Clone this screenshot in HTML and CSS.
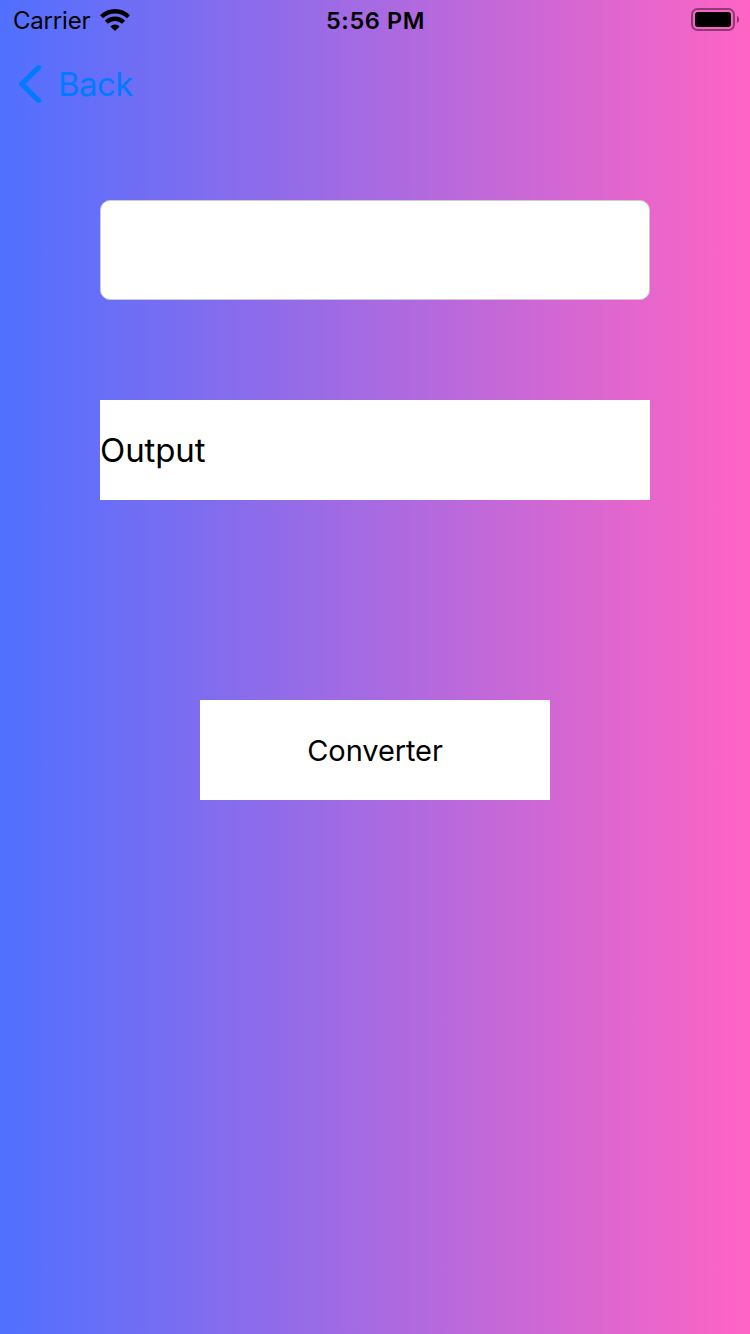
FILE: index.html
```html
<!DOCTYPE html>
<html lang="en">
<head>
<meta charset="utf-8">
<title>Converter</title>
<link rel="stylesheet" href="styles.css">
</head>
<body>
<div class="screen">
  <header class="status">
    <div class="status-left"><span class="carrier">Carrier</span>
      <svg class="wifi" width="30" height="22" viewBox="0 0 30 22"><g fill="none" stroke="#000" stroke-width="4.3"><path d="M1.500 7.700a19.500 19.500 0 0 1 27 0"/><path d="M6.400 13.200a12.400 12.400 0 0 1 17.200 0"/></g><path d="M15 22l-4.600-4.600a6.800 6.800 0 0 1 9.200 0z"/></svg>
    </div>
    <span class="time">5:56 PM</span>
    <div class="status-right"><svg class="battery" width="49" height="24" viewBox="0 0 49 24"><rect x="1" y="1" width="42" height="21" rx="5.5" fill="none" stroke="#000" stroke-opacity=".42" stroke-width="2"/><rect x="4" y="4" width="36" height="15" rx="3"/><path d="M46 8c2.700 1 2.700 6 0 7z" fill-opacity=".45"/></svg></div>
  </header>
  <nav class="nav"><svg class="chevron" width="24" height="40" viewBox="0 0 24 40"><path d="M20.500 3.500L3.800 20l16.700 16.500" fill="none" stroke="#007aff" stroke-width="5.200" stroke-linecap="round" stroke-linejoin="round"/></svg><span class="back">Back</span></nav>
  <main class="content">
    <input class="field" type="text" aria-label="Input">
    <div class="output"><span class="output-text">Output</span></div>
    <button class="convert"><span class="convert-text">Converter</span></button>
  </main>
</div>
</body>
</html>
```
FILE: styles.css
```css
* { box-sizing: border-box; }
body { margin: 0; font-family: Inter, "Liberation Sans", sans-serif; }
.screen { width: 750px; height: 1334px; background: linear-gradient(90deg, #5070ff, #ff64c4); overflow: hidden; }
.status { height: 40px; display: grid; grid-template-columns: 1fr auto 1fr; align-items: center; padding: 0 10px 0 13px; color: #000; }
.status-left { display: flex; align-items: center; gap: 9.5px; }
.status-right { display: flex; justify-content: flex-end; }
.carrier { font-size: 24px; line-height: 38px; padding-top: 2px; letter-spacing: -0.2px; }
.time { font-size: 23.5px; line-height: 38px; padding-top: 2px; font-weight: 570; letter-spacing: 0.6px; margin-left: -2px; }
.nav { height: 88px; display: flex; align-items: center; padding-left: 18px; gap: 16px; }
.back { font-size: 33px; line-height: 40px; color: #007aff; letter-spacing: -0.6px; }
.content { display: flex; flex-direction: column; align-items: center; padding-top: 72px; }
.field { width: 550px; height: 100px; border: 1px solid #ccc; border-radius: 10px; background: #fff; padding: 0 14px; font-size: 34px; outline: none; }
.output { width: 550px; height: 100px; margin-top: 100px; background: #fff; display: flex; align-items: center; font-size: 33px; letter-spacing: -0.1px; }
.convert { width: 350px; height: 100px; margin-top: 200px; background: #fff; border: 0; padding: 1px 0 0; color: #000; font-family: inherit; font-size: 29px; letter-spacing: -0.1px; }
```
